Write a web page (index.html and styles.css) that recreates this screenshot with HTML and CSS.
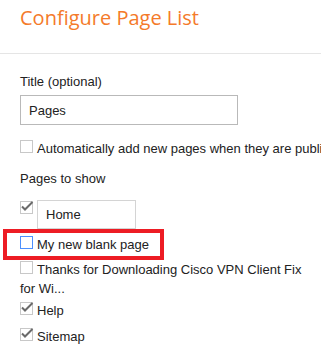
FILE: index.html
```html
<!DOCTYPE html>
<html lang="en">
<head>
  <meta charset="UTF-8">
  <title>Configure Page List</title>
  <meta name="viewport" content="width=device-width, initial-scale=1.0">
  <link rel="stylesheet" href="styles.css">
</head>
<body>

  <div class="dialog-header">
    <h1>Configure Page List</h1>
  </div>

  <div class="dialog-body">
    <div class="field-label">Title (optional)</div>
    <input type="text" class="title-input" value="Pages">

    <div class="auto-row"><span class="cb"></span>Automatically add new pages when they are published</div>

    <div class="field-label pages-label">Pages to show</div>
    <ul class="page-list">
      <li class="edit-row">
        <span class="cb checked"><svg viewBox="0 0 13 13"><rect x="0.5" y="0.5" width="12" height="12"/><path d="M2 5.5 L5 8.5 L12.5 1"/></svg></span>
        <input type="text" class="page-input" value="Home">
      </li>
      <li class="picked">
        <span class="cb focus"></span>My new blank page
        <span class="callout"></span>
      </li>
      <li class="long">
        <span class="cb"></span>Thanks for Downloading Cisco VPN Client Fix for Wi...
      </li>
      <li class="help">
        <span class="cb checked"><svg viewBox="0 0 13 13"><rect x="0.5" y="0.5" width="12" height="12"/><path d="M2 5.5 L5 8.5 L12.5 1"/></svg></span>Help
      </li>
      <li class="sitemap">
        <span class="cb checked"><svg viewBox="0 0 13 13"><rect x="0.5" y="0.5" width="12" height="12"/><path d="M2 5.5 L5 8.5 L12.5 1"/></svg></span>Sitemap
      </li>
    </ul>
  </div>

</body>
</html>
```

FILE: styles.css
```css
body {
  margin: 0;
  background: #fff;
  font-family: "Liberation Sans", Arial, sans-serif;
  font-size: 13px;
  color: #222;
  overflow: hidden;
}
.dialog-header {
  padding-bottom: 21px;
  border-bottom: 1px solid #e5e5e5;
}
.dialog-header h1 {
  margin: 0;
  padding: 4px 20px 0;
  font-family: "Open Sans", sans-serif;
  font-weight: 400;
  font-size: 20px;
  line-height: 28px;
  color: #f47a2a;
}
.dialog-body {
  padding-left: 20px;
}
.field-label {
  margin-top: 19px;
  line-height: 18px;
}
.pages-label {
  margin-top: 12px;
}
.title-input, .page-input {
  display: block;
  box-sizing: border-box;
  margin: 0;
  padding: 0 8px;
  font-family: "Liberation Sans", Arial, sans-serif;
  font-size: 13px;
  color: #222;
  background: #fff;
  outline: none;
}
.title-input {
  margin-top: 4px;
  width: 218px;
  height: 30px;
  border: 1px solid #b9b9b9;
}
.page-input {
  width: 99px;
  height: 29px;
  border: 1px solid #d4d4d4;
}
.auto-row {
  margin-top: 15px;
  line-height: 18px;
  white-space: nowrap;
  overflow: hidden;
}
.cb {
  display: inline-block;
  box-sizing: border-box;
  width: 13px;
  height: 13px;
  margin-right: 4px;
  border: 1px solid #c8c8c8;
  background: #fff;
}
.cb.focus {
  border-color: #4d90fe;
}
.cb.checked {
  border: none;
  background: none;
}
.cb svg {
  display: block;
  width: 13px;
  height: 13px;
  overflow: visible;
}
.cb svg rect {
  fill: #fff;
  stroke: #c8c8c8;
}
.cb svg path {
  fill: none;
  stroke: #6a6a6a;
  stroke-width: 2;
}
.page-list {
  list-style: none;
  margin: 12px 0 0;
  padding: 0;
  width: 290px;
}
.page-list li {
  line-height: 18px;
  margin-top: 7px;
}
.page-list .edit-row {
  display: flex;
  align-items: flex-start;
  margin-top: 0;
}
.edit-row .cb {
  margin-top: 1px;
}
.picked {
  position: relative;
}
.callout {
  position: absolute;
  left: -17px;
  top: -7px;
  width: 161px;
  height: 31px;
  box-sizing: border-box;
  border: 4px solid #ed1c24;
}
.page-list .long {
  margin-top: 6px;
  line-height: 19px;
}
.page-list .help {
  margin-top: 4px;
}
.page-list .sitemap {
  margin-top: 8px;
}
```
